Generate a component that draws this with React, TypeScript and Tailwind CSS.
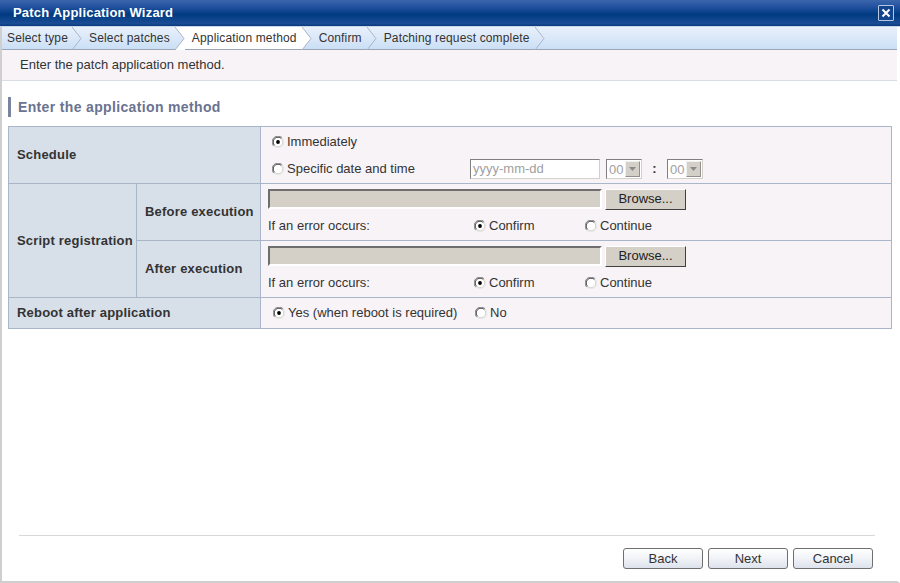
import React from 'react';

const font = { fontFamily: '"Liberation Sans", Arial, sans-serif' };

function Radio({ checked = false }: { checked?: boolean }) {
  return (
    <svg width="12" height="12" viewBox="0 0 12 12" className="shrink-0">
      <circle cx="6" cy="6" r="5.5" fill="#ffffff" />
      <path d="M1.8 10.2 A5.5 5.5 0 0 1 10.2 1.8" fill="none" stroke="#808080" strokeWidth="1" />
      <path d="M2.6 9.4 A4.5 4.5 0 0 1 9.4 2.6" fill="none" stroke="#404040" strokeWidth="1" />
      <path d="M10.2 1.8 A5.5 5.5 0 0 1 1.8 10.2" fill="none" stroke="#e8e8e8" strokeWidth="1" />
      <path d="M9.4 2.6 A4.5 4.5 0 0 1 2.6 9.4" fill="none" stroke="#d4d0c8" strokeWidth="1" />
      {checked && <circle cx="6" cy="6" r="1.9" fill="#000000" />}
    </svg>
  );
}

function RadioLabel({ checked, label }: { checked?: boolean; label: string }) {
  return (
    <span className="flex items-center gap-[3px]">
      <Radio checked={checked} />
      <span>{label}</span>
    </span>
  );
}

function Sep({ active }: { active?: 'before' | 'after' }) {
  return (
    <svg width="10" height="23" viewBox="0 0 10 23" className="shrink-0">
      {active === 'before' && <polygon points="0,0 10,0 10,23 0,23 9,11.5" fill="#ffffff" />}
      {active === 'after' && <polygon points="0,0 9,11.5 0,23" fill="#ffffff" />}
      <polyline points="0,0 9,11.5 0,23" fill="none" stroke="#a9b6c6" strokeWidth="1" />
    </svg>
  );
}

function TimeSelect() {
  return (
    <div className="flex h-[20px] w-[36px] items-center border border-t-[#808080] border-l-[#808080] border-b-[#d4d0c8] border-r-[#d4d0c8] bg-white">
      <span className="flex-1 pl-[2px] text-[13px] leading-none text-[#a0a0a0]">00</span>
      <span className="mr-[1px] flex h-[16px] w-[15px] items-center justify-center border border-t-[#f0f0f0] border-l-[#f0f0f0] border-b-[#909090] border-r-[#909090] bg-[#d4d0c8]">
        <svg width="7" height="4" viewBox="0 0 7 4">
          <polygon points="0,0 7,0 3.5,4" fill="#8a8a8a" />
        </svg>
      </span>
    </div>
  );
}

function ScriptCell() {
  return (
    <div className="pl-[7px]">
      <div className="flex h-[28px] items-center gap-[3px] pt-[2px]">
        <div className="h-[20px] w-[334px] border-2 border-t-[#6e6e6e] border-l-[#6e6e6e] border-b-[#ffffff] border-r-[#ffffff] bg-[#d4d0c8]" />
        <button className="flex h-[21px] w-[81px] items-center justify-center border border-t-[#ffffff] border-l-[#ffffff] border-b-[#404040] border-r-[#404040] bg-[#d4d0c8] text-[13px] text-[#222]" style={font}>
          Browse...
        </button>
      </div>
      <div className="flex h-[28px] items-center">
        <span className="w-[206px]">If an error occurs:</span>
        <span className="w-[111px]">
          <RadioLabel checked label="Confirm" />
        </span>
        <RadioLabel label="Continue" />
      </div>
    </div>
  );
}

export default function App() {
  const steps = ['Select type', 'Select patches', 'Application method', 'Confirm', 'Patching request complete'];
  const activeIdx = 2;

  return (
    <div className="flex h-[583px] w-[900px] flex-col bg-white text-[13px] text-[#333]" style={font}>
      {/* title bar */}
      <div className="flex h-[27px] items-center justify-between border-b border-b-[#c9d6ea] bg-[linear-gradient(180deg,#3a66ab_0%,#2452a0_25%,#003b82_55%,#1a4c94_90%,#0a3a7c_100%)] pl-[13px] pr-[6px]">
        <span className="text-[13px] font-bold tracking-[0.2px] text-white">Patch Application Wizard</span>
        <span className="flex h-[16px] w-[16px] items-center justify-center rounded-[1px] border border-[#b8c8e0] bg-[#13458f]">
          <svg width="10" height="10" viewBox="0 0 10 10">
            <path d="M1.5 1.5 L8.5 8.5 M8.5 1.5 L1.5 8.5" stroke="#ffffff" strokeWidth="2" />
          </svg>
        </span>
      </div>

      <div className="flex flex-1 flex-col border-b-2 border-l-2 border-r-[3px] border-[#cfcfcf] border-r-white">
        {/* breadcrumb */}
        <div className="flex h-[23px] items-stretch border-b border-b-[#98a6b8] bg-[linear-gradient(180deg,#e8f0fc_0%,#dbe8f8_50%,#cadff6_100%)] text-[12px] tracking-[0.15px] text-[#333]">
          {steps.map((s, i) => (
            <React.Fragment key={s}>
              <span className={`flex items-center ${i === 0 ? 'pl-[5px] pr-[4px]' : 'pl-[7px] pr-[5px]'} ${i === activeIdx ? 'bg-white' : ''}`}>
                {s}
              </span>
              <Sep active={i === activeIdx - 1 ? 'before' : i === activeIdx ? 'after' : undefined} />
            </React.Fragment>
          ))}
        </div>

        {/* description */}
        <div className="flex h-[31px] items-center border-b border-b-[#d8dde3] bg-[#f7f3f7] pl-[18px] text-[13px] text-[#333]">
          Enter the patch application method.
        </div>

        {/* heading */}
        <div className="mt-[16px] ml-[6px] flex h-[20px] items-center border-l-[3px] border-l-[#7a849e] pl-[7px] text-[14px] font-bold tracking-[0.35px] text-[#6a7390]">
          Enter the application method
        </div>

        {/* table */}
        <table className="mt-[9px] ml-[6px] w-[884px] border-collapse text-[13px] text-[#333]">
          <colgroup>
            <col className="w-[128px]" />
            <col className="w-[124px]" />
            <col />
          </colgroup>
          <tbody>
            <tr className="h-[57px]">
              <td colSpan={2} className="border border-[#a9b5c9] bg-[#d7dfe9] pl-[8px] font-bold tracking-[0.2px]">Schedule</td>
              <td className="border border-[#a9b5c9] bg-[#f7f3f7] p-0">
                <div className="pl-[11px]">
                  <div className="flex h-[28px] items-center pt-[1px]">
                    <RadioLabel checked label="Immediately" />
                  </div>
                  <div className="flex h-[28px] items-center">
                    <span className="w-[198px]">
                      <RadioLabel label="Specific date and time" />
                    </span>
                    <div className="flex h-[20px] w-[130px] items-center border border-t-[#808080] border-l-[#808080] border-b-[#d4d0c8] border-r-[#d4d0c8] bg-white pl-[2px] text-[13px] text-[#a0a0a0]">
                      yyyy-mm-dd
                    </div>
                    <span className="ml-[6px]"><TimeSelect /></span>
                    <span className="w-[25px] text-center font-bold">:</span>
                    <TimeSelect />
                  </div>
                </div>
              </td>
            </tr>
            <tr className="h-[57px]">
              <td rowSpan={2} className="border border-[#a9b5c9] bg-[#d7dfe9] pl-[8px] font-bold tracking-[0.2px]">Script registration</td>
              <td className="border border-[#a9b5c9] bg-[#d7dfe9] pl-[8px] font-bold tracking-[0.2px]">Before execution</td>
              <td className="border border-[#a9b5c9] bg-[#f7f3f7] p-0"><ScriptCell /></td>
            </tr>
            <tr className="h-[57px]">
              <td className="border border-[#a9b5c9] bg-[#d7dfe9] pl-[8px] font-bold tracking-[0.2px]">After execution</td>
              <td className="border border-[#a9b5c9] bg-[#f7f3f7] p-0"><ScriptCell /></td>
            </tr>
            <tr className="h-[31px]">
              <td colSpan={2} className="border border-[#a9b5c9] bg-[#d7dfe9] pl-[8px] font-bold tracking-[0.2px]">Reboot after application</td>
              <td className="border border-[#a9b5c9] bg-[#f7f3f7] p-0">
                <div className="flex items-center pl-[12px]">
                  <span className="w-[202px]">
                    <RadioLabel checked label="Yes (when reboot is required)" />
                  </span>
                  <RadioLabel label="No" />
                </div>
              </td>
            </tr>
          </tbody>
        </table>

        <div className="flex-1" />

        {/* footer */}
        <div className="mx-[17px] mr-[22px] border-t border-t-[#d8d8d8]" />
        <div className="flex justify-end gap-[5px] pb-[12px] pr-[24px] pt-[12px]">
          {['Back', 'Next', 'Cancel'].map((b) => (
            <button
              key={b}
              className="flex h-[21px] w-[80px] items-center justify-center rounded-[3px] border border-[#6f6f6f] bg-[linear-gradient(180deg,#ffffff_0%,#f2f4f8_45%,#dde2ec_100%)] text-[13px] text-[#333]"
              style={font}
            >
              {b}
            </button>
          ))}
        </div>
      </div>
    </div>
  );
}
